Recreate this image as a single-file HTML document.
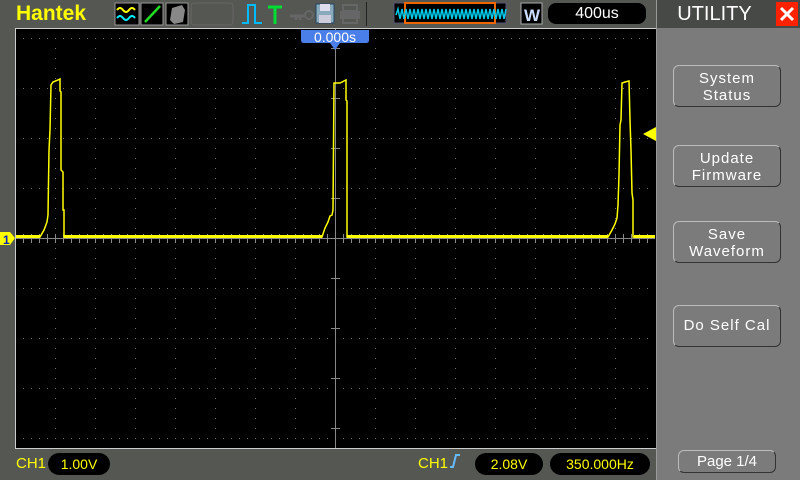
<!DOCTYPE html>
<html><head><meta charset="utf-8"><style>
body{margin:0;width:800px;height:480px;overflow:hidden;background:#555753;font-family:"Liberation Sans",sans-serif}
.t{position:absolute;white-space:nowrap}
.btn{position:absolute;left:673px;width:108px;border:1px solid #bbb;border-right-color:#333;border-bottom-color:#333;border-radius:6px;color:#fff;font-size:15px;text-align:center;line-height:17px;box-sizing:border-box;letter-spacing:1px}
.pill{position:absolute;background:#000;border-radius:11px;color:#ff0;font-size:14px;text-align:center;height:22px;line-height:22px}
</style></head><body>
<svg width="800" height="480" style="position:absolute;left:0;top:0">
<defs>
<pattern id="ph" x="23" y="38" width="8" height="50" patternUnits="userSpaceOnUse"><rect width="1" height="1" fill="#777"/></pattern>
<pattern id="pv" x="55" y="38" width="40" height="10" patternUnits="userSpaceOnUse"><rect width="1" height="1" fill="#777"/></pattern>
<pattern id="tk" x="335" y="0" width="8" height="480" patternUnits="userSpaceOnUse"><rect x="0" y="234" width="1" height="9" fill="#888"/></pattern>
</defs>
<rect x="0" y="0" width="800" height="480" fill="#555753"/>
<rect x="657" y="0" width="143" height="480" fill="#7b7b7b"/>
<rect x="657" y="0" width="143" height="28" fill="#474946"/>
<rect x="656" y="0" width="1" height="480" fill="#999"/>
<rect x="15" y="28" width="641" height="421" fill="#000"/>
<rect x="15" y="28" width="641" height="1" fill="#ccc"/>
<rect x="15" y="28" width="1" height="421" fill="#ccc"/>
<rect x="15" y="448" width="641" height="1" fill="#ccc"/>
<rect x="16" y="38" width="639" height="401" fill="url(#ph)"/>
<rect x="55" y="38" width="600" height="405" fill="url(#pv)"/>
<rect x="16" y="0" width="639" height="480" fill="url(#tk)"/>
<rect x="335" y="29" width="1" height="419" fill="#888"/>
<rect x="16" y="238" width="639" height="1" fill="#888"/>
<g fill="#888">
<rect x="331" y="48" width="9" height="1"/><rect x="331" y="98" width="9" height="1"/><rect x="331" y="148" width="9" height="1"/><rect x="331" y="198" width="9" height="1"/><rect x="331" y="278" width="9" height="1"/><rect x="331" y="328" width="9" height="1"/><rect x="331" y="378" width="9" height="1"/><rect x="331" y="428" width="9" height="1"/>
</g>
<g stroke="#ff0" stroke-width="1.5" fill="none">
<path d="M16 237 H40 L44 230 L47 222 L48 215 L49 150 L50 130 L51 85 L53 82 L58 80 L60 79 L60 91 L61 92 L61 170 L63 172 L63 210 L64 210 L64 237 H322 L325 228 L328 222 L330 216 L332 215 L333 210 L334 83 L340 83 L344 81 L346 80 L346 100 L347 101 L347 237 H608 L612 230 L615 224 L617 218 L618 205 L619 175 L620 125 L621 120 L622 83 L625 82 L629 81 L630 120 L631 150 L632 193 L633 200 L633 237 H655"/>
</g>
<rect x="16" y="235" width="24" height="3" fill="#ff0"/><rect x="64" y="235" width="258" height="3" fill="#ff0"/><rect x="347" y="235" width="261" height="3" fill="#ff0"/><rect x="634" y="235" width="21" height="3" fill="#ff0"/>
<path d="M643 134 L656 127 L656 141 Z" fill="#ff0"/>
<path d="M0 232 H10 L15 238 L10 245 H0 Z" fill="#ff0"/>
<text x="3" y="244" font-size="12" font-weight="bold" fill="#0020c0" font-family="Liberation Sans">1</text>
<path d="M301 30 H369 V40 Q369 43 366 43 H340 L335 50 L330 43 H304 Q301 43 301 40 Z" fill="#4a7ee8"/>
<rect x="115" y="3" width="24" height="22" fill="#000" stroke="#999"/>
<path d="M117 10 q3 -4 6 0 t6 0 t6 0" stroke="#ff0" stroke-width="2" fill="none"/>
<path d="M117 18 q3 -4 6 0 t6 0 t6 0" stroke="#0ef" stroke-width="2" fill="none"/>
<rect x="141" y="3" width="22" height="22" fill="#000" stroke="#999"/>
<path d="M145 22 L160 6" stroke="#2d2" stroke-width="2.5"/>
<rect x="166" y="3" width="22" height="22" fill="#000" stroke="#999"/>
<path d="M170 20 L172 8 L182 5 L185 10 L183 22 L174 24 Z" fill="#888"/>
<rect x="191" y="3" width="42" height="22" rx="3" fill="none" stroke="#666"/>
<path d="M242 23 H248 V5 H255 V23 H262" stroke="#0bf" stroke-width="2" fill="none"/>
<path d="M268 7 H282 M275 7 V24" stroke="#0d3" stroke-width="3"/>
<path d="M290 16 H305 M296 16 V20 M300 16 V20" stroke="#666" stroke-width="3"/><circle cx="309" cy="15" r="4" fill="none" stroke="#666" stroke-width="2"/>
<rect x="316" y="4" width="18" height="19" fill="#8ab" stroke="#246"/><rect x="320" y="4" width="10" height="7" fill="#dde"/><rect x="319" y="15" width="12" height="8" fill="#ccd"/>
<rect x="343" y="5" width="14" height="6" fill="none" stroke="#666" stroke-width="2"/><rect x="340" y="11" width="20" height="8" fill="#666"/><rect x="343" y="17" width="14" height="6" fill="none" stroke="#666" stroke-width="2"/>
<rect x="366" y="2" width="1" height="24" fill="#222"/>
<rect x="394" y="3" width="112" height="20" fill="#000" stroke="#557"/>
<rect x="405" y="3" width="90" height="20" fill="none" stroke="#e60" stroke-width="2"/>
<path d="M396 15 l2 -6 l2 10 l2 -10 l2 10 l2 -10 l2 10 l2 -10 l2 10 l2 -10 l2 10 l2 -10 l2 10 l2 -10 l2 10 l2 -10 l2 10 l2 -10 l2 10 l2 -10 l2 10 l2 -10 l2 10 l2 -10 l2 10 l2 -10 l2 10 l2 -10 l2 10 l2 -10 l2 10 l2 -10 l2 10 l2 -10 l2 10 l2 -10 l2 10 l2 -10 l2 10 l2 -10 l2 10 l2 -10 l2 10 l2 -10 l2 10 l2 -10 l2 10 l2 -10 l2 10 l2 -10 l2 10 l2 -10 l2 10 l2 -10 l2 10 l2 -10" stroke="#0ce" stroke-width="1.5" fill="none"/>
<rect x="521" y="3" width="21" height="21" fill="#000" stroke="#aaa"/>
<text x="524" y="21" font-size="17" font-weight="bold" fill="#cdf">W</text>
<rect x="548" y="3" width="98" height="21" rx="8" fill="#000"/>
<rect x="776" y="2" width="22" height="24" fill="#f20"/>
<path d="M781 8 L793 20 M793 8 L781 20" stroke="#fff" stroke-width="3"/>
<path d="M450 467 H453 L456 455 H460" stroke="#6bf" stroke-width="2" fill="none"/>
</svg>
<div class="t" style="left:16px;top:2px;font-size:21px;font-weight:bold;color:#ff0">Hantek</div>
<div class="t" style="left:301px;top:29px;width:68px;text-align:center;color:#fff;font-size:14px">0.000s</div>
<div class="t" style="left:548px;top:5px;width:98px;text-align:center;color:#fff;font-size:16px">400us</div>
<div class="t" style="left:657px;top:3px;width:115px;text-align:center;color:#fff;font-size:20px">UTILITY</div>
<div class="btn" style="top:65px;height:42px;padding-top:4px">System<br>Status</div>
<div class="btn" style="top:145px;height:42px;padding-top:4px">Update<br>Firmware</div>
<div class="btn" style="top:221px;height:42px;padding-top:4px">Save<br>Waveform</div>
<div class="btn" style="top:305px;height:42px;line-height:40px">Do Self Cal</div>
<div class="btn" style="top:450px;height:23px;left:678px;width:98px;line-height:21px;letter-spacing:0">Page 1/4</div>
<div class="t" style="left:16px;top:455px;color:#ff0;font-size:15px">CH1</div>
<div class="pill" style="left:48px;top:453px;width:62px">1.00V</div>
<div class="t" style="left:418px;top:455px;color:#ff0;font-size:15px">CH1</div>
<div class="pill" style="left:475px;top:453px;width:68px">2.08V</div>
<div class="pill" style="left:550px;top:453px;width:100px">350.000Hz</div>
</body></html>
